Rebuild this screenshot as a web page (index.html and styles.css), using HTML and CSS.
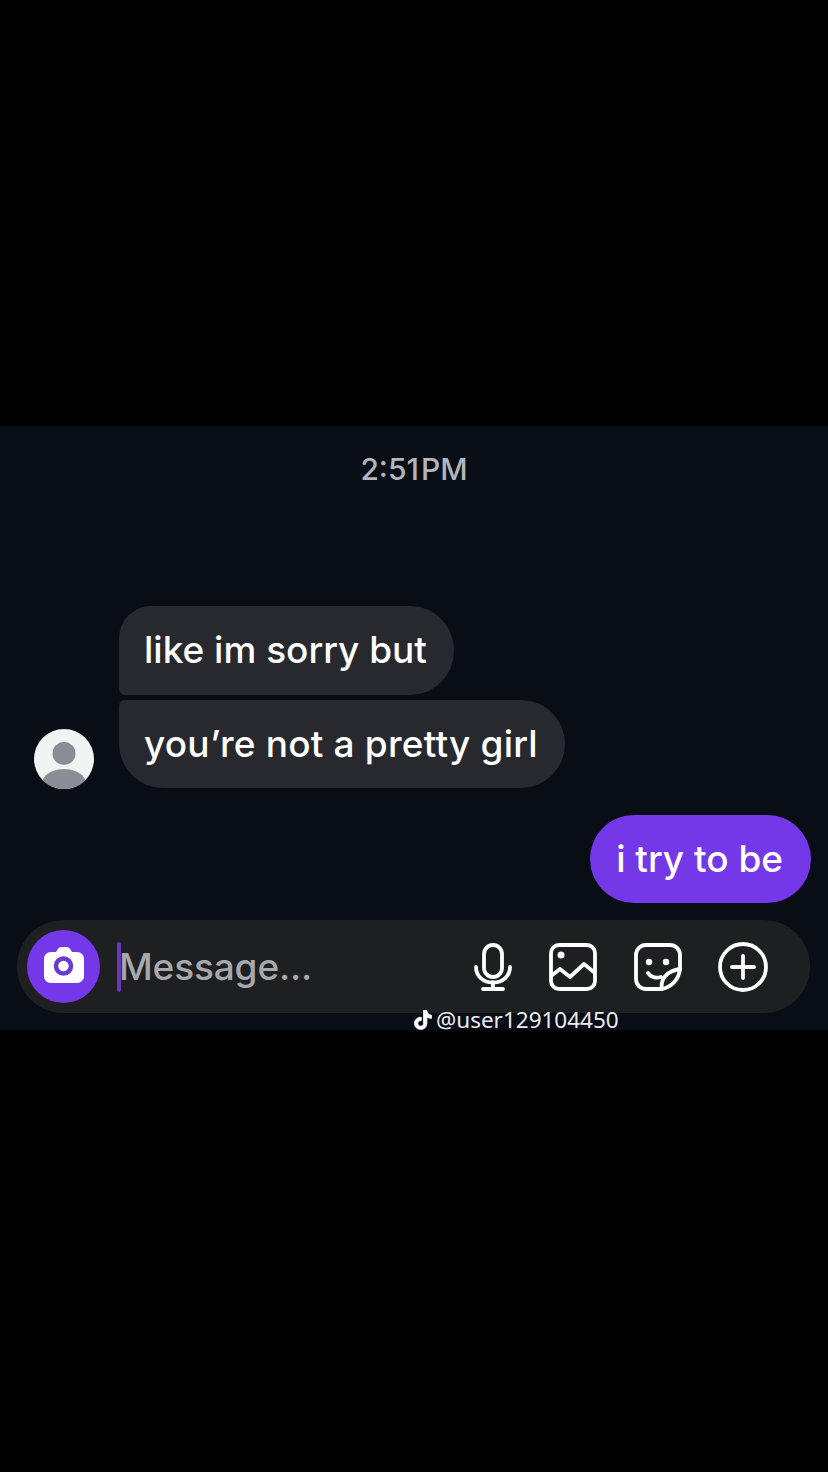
FILE: index.html

```html
<!DOCTYPE html>
<html lang="en">
<head>
  <meta charset="utf-8">
  <meta name="viewport" content="width=device-width, initial-scale=1.0">
  <title>Message thread</title>
  <link rel="stylesheet" href="styles.css">
</head>
<body>

  <div class="screen">
    <p class="time">2:51<span class="time-suffix">PM</span></p>

    <div class="thread">
      <div class="avatar">
        <svg viewBox="0 0 60 60" width="60" height="60">
          <circle cx="30" cy="30" r="30" fill="#f2f3f3"/>
          <circle cx="30" cy="24.500" r="11.500" fill="#8b8d94"/>
          <path d="M8.500 51 C12 44 20 40 30 40 C40 40 48 44 51.500 51 C46 56.500 38.500 60 30 60 C21.500 60 14 56.500 8.500 51 Z" fill="#8b8d94"/>
        </svg>
      </div>
      <div class="received">
        <div class="bubble bubble-first">like im sorry but</div>
        <div class="bubble bubble-last">you’re not a pretty girl</div>
      </div>
    </div>

    <div class="sent-row">
      <div class="bubble-sent">i try to be</div>
    </div>

    <div class="composer">
      <div class="camera">
        <svg viewBox="0 0 40 36" width="40" height="36">
          <path d="M12 5 L13.500 2.500 C14.500 0.800 16 0 18 0 H22 C24 0 25.500 0.800 26.500 2.500 L28 5 H33 C37 5 40 8 40 12 V29 C40 33 37 36 33 36 H7 C3 36 0 33 0 29 V12 C0 8 3 5 7 5 Z" fill="#fff"/>
          <circle cx="19.500" cy="19" r="7.500" fill="none" stroke="#6a3bd0" stroke-width="4.500"/>
        </svg>
      </div>
      <div class="caret"></div>
      <span class="placeholder">Message...</span>
      <div class="tools">
        <svg class="tool tool-mic" viewBox="0 0 38 48" width="38" height="48" fill="none" stroke="#fff" stroke-width="3.800" stroke-linecap="round" stroke-linejoin="round">
          <rect x="10" y="2" width="18" height="32" rx="9"/>
          <path d="M2 24 C2 33 9 39.500 19 39.500 C29 39.500 36 33 36 24"/>
          <path d="M19 39.500 V46 M9 46 H29"/>
        </svg>
        <svg class="tool tool-image" viewBox="0 0 48 48" width="48" height="48" fill="none" stroke="#fff" stroke-width="3.800" stroke-linejoin="round">
          <rect x="2" y="2" width="44" height="44" rx="8"/>
          <circle cx="12" cy="12" r="3.500" fill="#fff" stroke="none"/>
          <path d="M2 33 L11 26 L21 34 L35 21 L46 30"/>
        </svg>
        <svg class="tool tool-sticker" viewBox="0 0 48 48" width="48" height="48" fill="none" stroke="#fff" stroke-width="3.800" stroke-linejoin="round" stroke-linecap="round">
          <path d="M28 46 H12 C6.500 46 2 41.500 2 36 V12 C2 6.500 6.500 2 12 2 H36 C41.500 2 46 6.500 46 12 V26 C45 36 38 44 28 46 Z"/>
          <path d="M28 46 C26 36 33 28 46 26"/>
          <circle cx="15" cy="19" r="3.200" fill="#fff" stroke="none"/>
          <circle cx="32" cy="19" r="3.200" fill="#fff" stroke="none"/>
          <path d="M14 30 C17 34 22 35.500 27 34"/>
        </svg>
        <svg class="tool tool-plus" viewBox="0 0 50 50" width="50" height="50" fill="none" stroke="#fff" stroke-width="3.800" stroke-linecap="round">
          <circle cx="25" cy="25" r="23"/>
          <path d="M25 14 V36 M14 25 H36"/>
        </svg>
      </div>
    </div>

    <!-- watermark sits on top of the screen edge -->
    <div class="watermark">
      <svg viewBox="0 0 18 20" width="18" height="20">
        <path d="M9.500 0.500 H12.800 C13 3 14.800 5 17.500 5.200 V8.400 C15.800 8.400 14.200 7.900 12.900 7 V13.300 C12.900 16.900 10.100 19.500 6.700 19.500 C3.200 19.500 0.500 16.800 0.500 13.300 C0.500 9.700 3.600 6.900 7.300 7.300 V10.600 C5.500 10.200 3.800 11.500 3.800 13.300 C3.800 14.900 5.100 16.200 6.700 16.200 C8.300 16.200 9.500 15 9.500 13.300 Z" fill="#fff" stroke="#fff" stroke-width="0.800"/>
      </svg>
      <span>@user129104450</span>
    </div>
  </div>

</body>
</html>
```

FILE: styles.css

```css
html, body {
  margin: 0;
  background-color: #000;
}
body {
  font-family: Inter, "Liberation Sans", sans-serif;
  height: 1472px;
  padding-top: 426px;
  box-sizing: border-box;
  overflow: hidden;
}
.screen {
  position: relative;
  height: 604px;
  box-sizing: border-box;
  padding: 24px 17px 0 17px;
  background-color: #090d15;
}
.time {
  margin: 0;
  text-align: center;
  font-size: 30px;
  font-weight: 500;
  line-height: 38px;
  color: #b2b5bc;
}
.time-suffix {
  margin-left: 2px;
}
.thread {
  display: flex;
  align-items: flex-end;
  margin-top: 118px;
  padding-left: 17px;
}
.avatar {
  width: 60px;
  height: 60px;
  margin-right: 25px;
  margin-bottom: -1px;
}
.avatar svg, .camera svg, .tool {
  display: block;
}
.received {
  display: flex;
  flex-direction: column;
  align-items: flex-start;
  gap: 5px;
}
.bubble {
  height: 89px;
  box-sizing: border-box;
  padding: 0 27px 2px 25px;
  display: flex;
  align-items: center;
  background-color: #27292e;
  color: #fff;
  font-size: 37px;
  font-weight: 500;
  white-space: nowrap;
}
.bubble-first {
  border-radius: 32px 44px 44px 6px;
}
.bubble-last {
  height: 88px;
  border-radius: 6px 44px 44px 44px;
  letter-spacing: 0.2px;
}
.sent-row {
  display: flex;
  justify-content: flex-end;
  margin-top: 27px;
}
.bubble-sent {
  height: 88px;
  box-sizing: border-box;
  padding: 0 28px 2px 26px;
  display: flex;
  align-items: center;
  border-radius: 44px;
  background-color: #7538e8;
  color: #fff;
  font-size: 37px;
  font-weight: 500;
}
.composer {
  display: flex;
  align-items: center;
  height: 93px;
  margin-top: 17px;
  margin-right: 1px;
  padding-left: 10px;
  border-radius: 46px;
  background-color: #1d1f21;
}
.camera {
  width: 73px;
  height: 73px;
  box-sizing: border-box;
  padding-bottom: 3px;
  display: flex;
  align-items: center;
  justify-content: center;
  border-radius: 50%;
  background-color: #7538e8;
}
.caret {
  width: 4px;
  height: 50px;
  margin-left: 17px;
  border-radius: 2px;
  background-color: #6b35b5;
}
.placeholder {
  margin-left: -2px;
  font-size: 37px;
  font-weight: 500;
  letter-spacing: -0.15px;
  color: #a6a8ad;
}
.tools {
  display: flex;
  align-items: center;
  margin-left: auto;
  padding-right: 42px;
}
.tool-image, .tool-sticker {
  margin-left: 37px;
}
.tool-plus {
  margin-left: 36px;
}
.watermark {
  position: absolute;
  left: 414px;
  top: 580px;
  display: flex;
  align-items: center;
  gap: 4px;
  color: #ececec;
  font-family: "Noto Sans", sans-serif;
  font-size: 22.500px;
  line-height: 28px;
}
```
